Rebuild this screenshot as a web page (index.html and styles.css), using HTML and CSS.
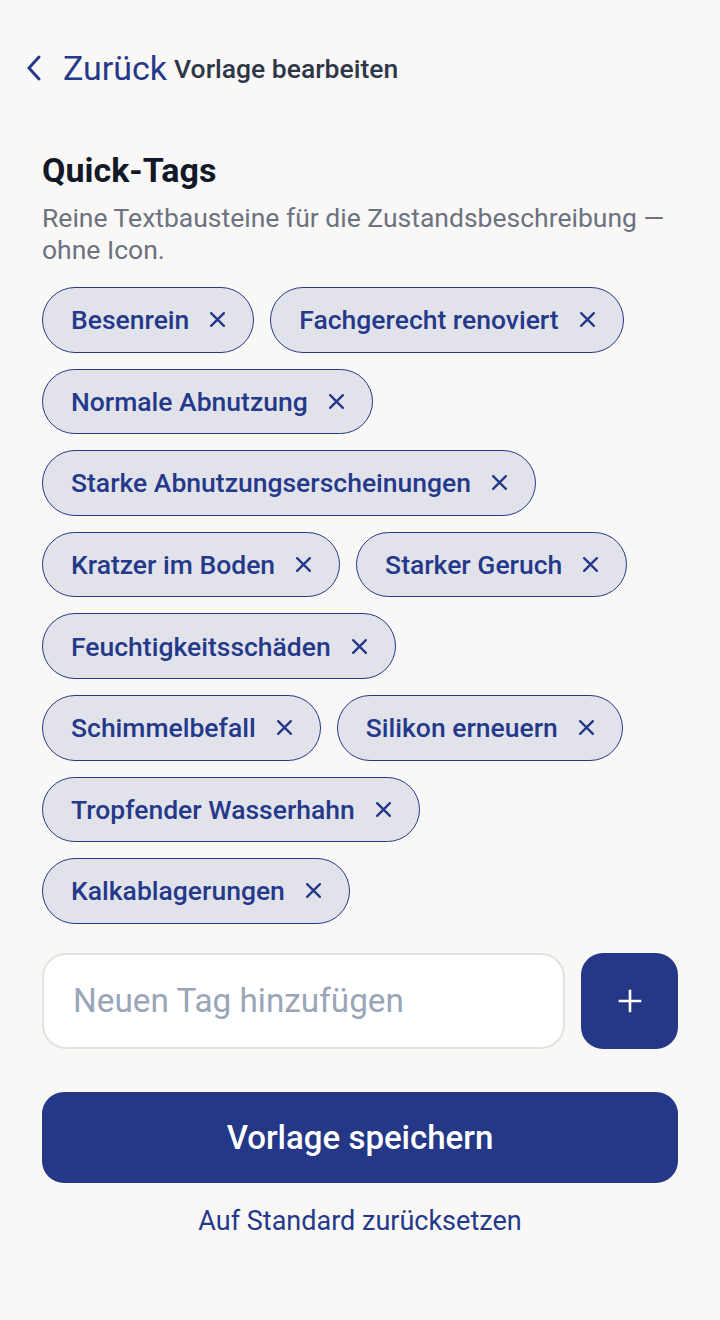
FILE: index.html
```html
<!DOCTYPE html>
<html lang="de">
<head>
<meta charset="utf-8">
<link rel="stylesheet" href="styles.css">
</head>
<body>
<div class="page">
  <header class="topbar">
    <a class="back">
      <svg class="chev" width="16" height="26" viewBox="0 0 16 26"><path d="M13 2 L3 13 L13 24" fill="none" stroke="#25398a" stroke-width="3" stroke-linecap="round" stroke-linejoin="round"/></svg>
      <span class="back-label">Zurück</span>
    </a>
    <span class="title">Vorlage bearbeiten</span>
  </header>

  <h1 class="section-title">Quick-Tags</h1>
  <p class="section-sub">Reine Textbausteine für die Zustandsbeschreibung — ohne Icon.</p>

  <div class="tags">
    <span class="tag">Besenrein<svg class="x" viewBox="0 0 16 16"><path d="M2 2 L14 14 M14 2 L2 14"/></svg></span>
    <span class="tag">Fachgerecht renoviert<svg class="x" viewBox="0 0 16 16"><path d="M2 2 L14 14 M14 2 L2 14"/></svg></span>
    <span class="tag">Normale Abnutzung<svg class="x" viewBox="0 0 16 16"><path d="M2 2 L14 14 M14 2 L2 14"/></svg></span>
    <span class="tag">Starke Abnutzungserscheinungen<svg class="x" viewBox="0 0 16 16"><path d="M2 2 L14 14 M14 2 L2 14"/></svg></span>
    <span class="tag">Kratzer im Boden<svg class="x" viewBox="0 0 16 16"><path d="M2 2 L14 14 M14 2 L2 14"/></svg></span>
    <span class="tag">Starker Geruch<svg class="x" viewBox="0 0 16 16"><path d="M2 2 L14 14 M14 2 L2 14"/></svg></span>
    <span class="tag">Feuchtigkeitsschäden<svg class="x" viewBox="0 0 16 16"><path d="M2 2 L14 14 M14 2 L2 14"/></svg></span>
    <span class="tag">Schimmelbefall<svg class="x" viewBox="0 0 16 16"><path d="M2 2 L14 14 M14 2 L2 14"/></svg></span>
    <span class="tag">Silikon erneuern<svg class="x" viewBox="0 0 16 16"><path d="M2 2 L14 14 M14 2 L2 14"/></svg></span>
    <span class="tag">Tropfender Wasserhahn<svg class="x" viewBox="0 0 16 16"><path d="M2 2 L14 14 M14 2 L2 14"/></svg></span>
    <span class="tag">Kalkablagerungen<svg class="x" viewBox="0 0 16 16"><path d="M2 2 L14 14 M14 2 L2 14"/></svg></span>
  </div>

  <div class="add-row">
    <div class="input">Neuen Tag hinzufügen</div>
    <div class="add-btn">
      <svg width="24" height="24" viewBox="0 0 24 24"><path d="M12 2 V22 M2 12 H22" stroke="#fff" stroke-width="2.6" stroke-linecap="square"/></svg>
    </div>
  </div>

  <div class="save">Vorlage speichern</div>
  <div class="reset">Auf Standard zurücksetzen</div>
</div>
</body>
</html>
```
FILE: styles.css
```css
html, body {
  margin: 0;
  padding: 0;
  background: #f9f8f6;
}
body {
  font-family: Roboto, "Liberation Sans", sans-serif;
  color: #111827;
}
.page {
  padding: 44px 42px 0 42px;
}
.topbar {
  display: flex;
  align-items: center;
  height: 48px;
  margin-left: -16px;
}
.back {
  display: flex;
  align-items: center;
  color: #25398a;
}
.chev {
  display: block;
  margin-right: 21px;
}
.back-label {
  font-size: 34px;
  font-weight: 400;
  line-height: 48px;
}
.title {
  font-size: 26.5px;
  font-weight: 500;
  color: #2d3748;
  margin-left: 7px;
  line-height: 48px;
  padding-top: 2px;
}
.section-title {
  margin: 57px 0 0 0;
  font-size: 34px;
  font-weight: 700;
  line-height: 42px;
  color: #111827;
}
.section-sub {
  margin: 11px 0 0 0;
  font-size: 26.5px;
  line-height: 32px;
  color: #6b7280;
}
.tags {
  display: flex;
  flex-wrap: wrap;
  gap: 16px;
  margin-top: 21px;
}
.tag {
  box-sizing: border-box;
  height: 65.6px;
  display: inline-flex;
  align-items: center;
  padding: 0 27px 0 28px;
  border: 1.5px solid #25398a;
  border-radius: 33px;
  background: #e2e3ea;
  color: #25398a;
  font-size: 26.5px;
  font-weight: 500;
}
.x {
  width: 17px;
  height: 17px;
  margin-left: 20px;
  fill: none;
  stroke: #25398a;
  stroke-width: 2.2;
  stroke-linecap: round;
}
.add-row {
  display: flex;
  gap: 16px;
  margin-top: 29px;
}
.input {
  flex: 1;
  box-sizing: border-box;
  height: 96px;
  border: 2px solid #e4e2de;
  border-radius: 24px;
  background: #fff;
  display: flex;
  align-items: center;
  padding-left: 29px;
  font-size: 33.3px;
  color: #9aa5b8;
}
.add-btn {
  width: 97px;
  height: 96px;
  border-radius: 22px;
  background: #253887;
  display: flex;
  align-items: center;
  justify-content: center;
}
.save {
  margin-top: 43px;
  height: 91px;
  border-radius: 22px;
  background: #253887;
  color: #fff;
  font-size: 33px;
  font-weight: 500;
  display: flex;
  align-items: center;
  justify-content: center;
}
.reset {
  margin-top: 22px;
  text-align: center;
  font-size: 27px;
  line-height: 32px;
  color: #25398a;
}
```
